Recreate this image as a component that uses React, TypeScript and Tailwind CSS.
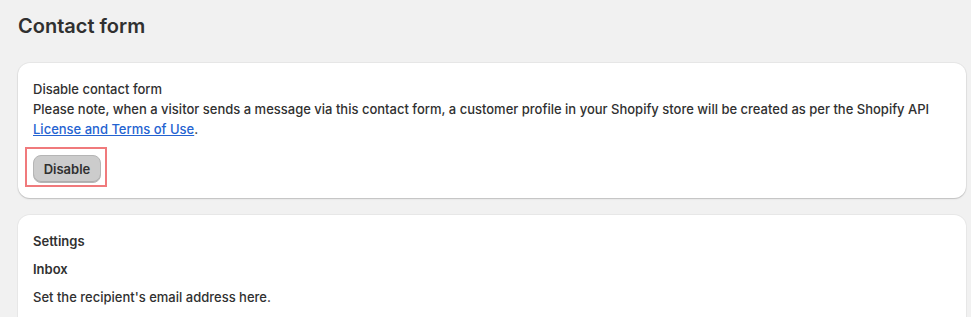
export default function App() {
  return (
    <div className="min-h-[317px] bg-[#f1f1f1] pl-[18px] pr-[5px] pt-[12px] font-['Inter',sans-serif] text-[13px] leading-[20px] font-[450] text-[#303030]">
      <h1 className="text-[20px] leading-[28px] font-semibold text-[#303030]">
        Contact form
      </h1>

      <section className="mt-[23px] rounded-[12px] bg-white px-[15px] pt-[16px] pb-[15px] shadow-[0_1px_0_0_rgba(26,26,26,0.07),0_0_0_1px_rgba(0,0,0,0.04),0_1px_2px_rgba(0,0,0,0.12)]">
        <p>Disable contact form</p>
        <p>
          Please note, when a visitor sends a message via this contact form, a
          customer profile in your Shopify store will be created as per the
          Shopify API
        </p>
        <p>
          <a href="#" className="text-[#2463d1] underline">
            License and Terms of Use
          </a>
          .
        </p>
        <div className="relative mt-[16px] inline-block">
          <button className="flex h-[28px] w-[68px] items-center justify-center rounded-[8px] border border-[#b5b5b5] bg-[#cccccc] text-[13px] font-semibold text-[#303030] shadow-[inset_0_-1px_0_rgba(0,0,0,0.15)]">
            Disable
          </button>
          <span className="pointer-events-none absolute -top-[8px] -left-[8px] -right-[6px] -bottom-[4px] border-2 border-[#f07a7c]" />
        </div>
      </section>

      <section className="mt-[17px] rounded-t-[12px] bg-white px-[15px] pt-[16px] pb-[10px] shadow-[0_0_0_1px_rgba(0,0,0,0.04)]">
        <p className="font-semibold">Settings</p>
        <p className="mt-[8px] font-semibold">Inbox</p>
        <p className="mt-[8px]">Set the recipient's email address here.</p>
      </section>
    </div>
  );
}
